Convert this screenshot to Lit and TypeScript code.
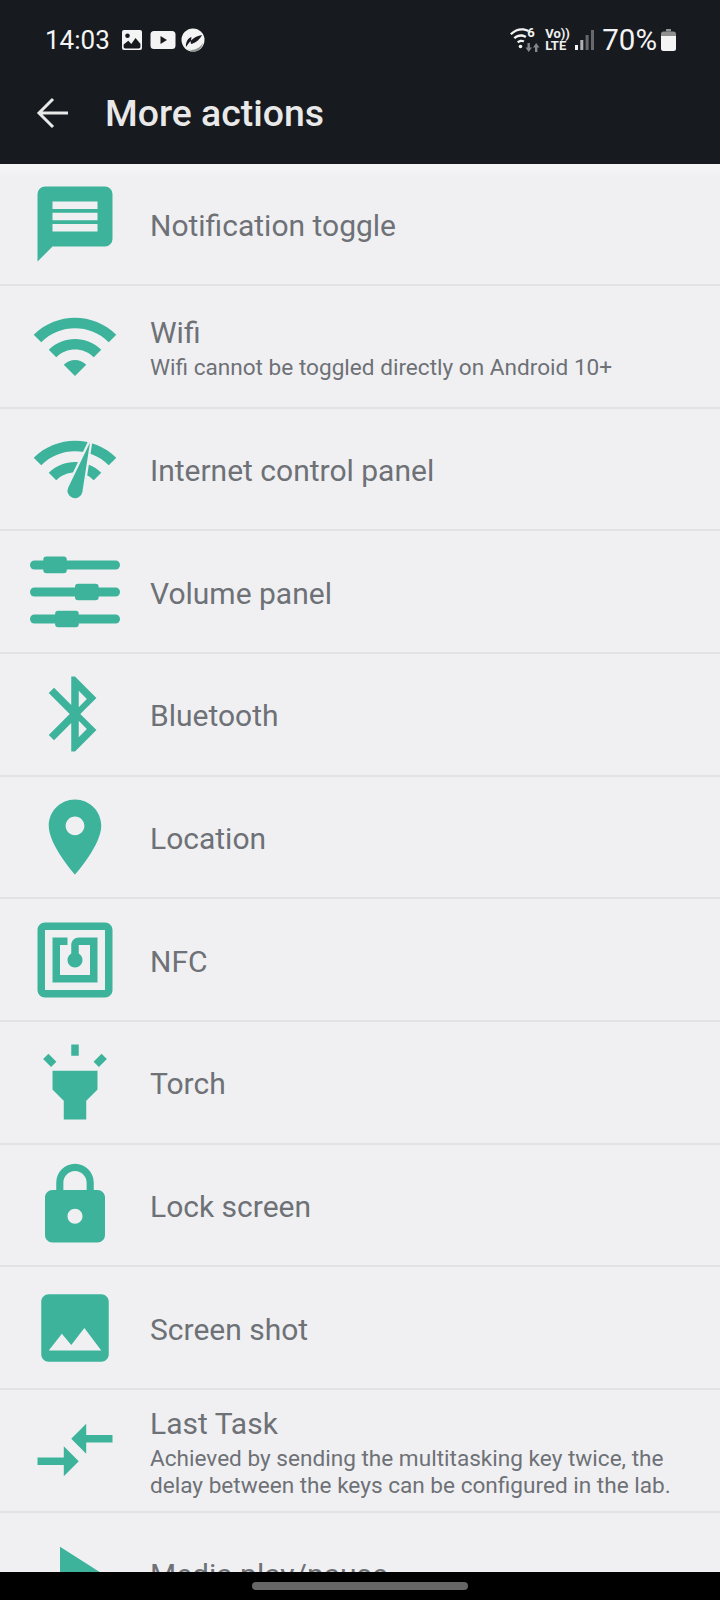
import { LitElement, html, css, svg } from "lit";
import { customElement } from "lit/decorators.js";

const WIFI_ARCS =
  "M1 9l2 2c4.97-4.97 13.03-4.97 18 0l2-2C16.93 2.93 7.08 2.93 1 9zM5 13l2 2c2.76-2.76 7.24-2.76 10 0l2-2C15.14 9.14 8.87 9.14 5 13z";

const ICONS = {
  chat: svg`<path d="M20 2H4a2 2 0 0 0-2 2v18l4-4h14a2 2 0 0 0 2-2V4a2 2 0 0 0-2-2zM6 6h12v2H6zm0 3h12v2H6zm0 3h12v2H6z" fill-rule="evenodd"/>`,
  wifi: svg`<path d="${WIFI_ARCS}"/><path d="M9 17l3 3 3-3c-1.65-1.66-4.34-1.66-6 0z"/>`,
  gauge: svg`<path d="${WIFI_ARCS}"/><path class="halo" d="M16 4.9L13.95 18.2A2 2 0 1 1 10.2 16.9Z"/>`,
  sliders: svg`
    <rect x="0" y="3.6" width="24" height="2.4" rx="1.2"/><rect x="3.55" y="2.5" width="6.25" height="4.5" rx=".8"/>
    <rect x="0" y="10.8" width="24" height="2.4" rx="1.2"/><rect x="12" y="9.8" width="6.3" height="4.4" rx=".8"/>
    <rect x="0" y="18" width="24" height="2.4" rx="1.2"/><rect x="6.7" y="17" width="6.3" height="4.4" rx=".8"/>`,
  bluetooth: svg`<path d="M17.71 7.71L12 2h-1v7.59L6.41 5 5 6.41 10.59 12 5 17.59 6.41 19 11 14.41V22h1l5.71-5.71-4.3-4.29 4.3-4.29zM13 5.83L15.17 8 13 10.17V5.83zm0 8L15.17 16 13 18.17v-4.34z"/>`,
  place: svg`<path d="M12 2C8.13 2 5 5.13 5 9c0 5.25 7 13 7 13s7-7.75 7-13c0-3.87-3.13-7-7-7zm0 9.5c-1.38 0-2.5-1.12-2.5-2.5s1.12-2.5 2.5-2.5 2.5 1.12 2.5 2.5-1.12 2.5-2.5 2.5z"/>`,
  nfc: svg`<path d="M20 2H4c-1.1 0-2 .9-2 2v16c0 1.1.9 2 2 2h16c1.1 0 2-.9 2-2V4c0-1.1-.9-2-2-2zm0 18H4V4h16v16zM18 6h-5c-1.1 0-2 .9-2 2v2.28c-.6.35-1 .98-1 1.72 0 1.1.9 2 2 2s2-.9 2-2c0-.74-.4-1.38-1-1.72V8h3v8H8V8h2V6H6v12h12V6z"/>`,
  torch: svg`<path d="M6 14l3 3v5h6v-5l3-3V9H6zm5-12h2v3h-2zM3.5 5.875L4.914 4.46l2.12 2.122L5.62 7.997zm13.46.71l2.123-2.12 1.414 1.413L18.375 8z"/>`,
  lock: svg`<path d="M18 8h-1V6c0-2.76-2.24-5-5-5S7 3.24 7 6v2H6c-1.1 0-2 .9-2 2v10c0 1.1.9 2 2 2h12c1.1 0 2-.9 2-2V10c0-1.1-.9-2-2-2zm-6 9c-1.1 0-2-.9-2-2s.9-2 2-2 2 .9 2 2-.9 2-2 2zm3.1-9H8.9V6c0-1.71 1.39-3.1 3.1-3.1 1.71 0 3.1 1.39 3.1 3.1v2z"/>`,
  image: svg`<path d="M21 19V5c0-1.1-.9-2-2-2H5c-1.1 0-2 .9-2 2v14c0 1.1.9 2 2 2h14c1.1 0 2-.9 2-2zM8.5 13.5l2.5 3.01L14.5 12l4.5 6H5l3.5-4.5z"/>`,
  swap: svg`<path d="M9.01 14H2v2h7.01v3L13 15l-3.99-4v3zm5.98-1v-3H22V8h-7.01V5L11 9l3.99 4z"/>`,
  play: svg`<path d="M8 5v14l11-7z"/>`,
};

type Action = { icon: keyof typeof ICONS; title: string; sub?: string[] };

const ACTIONS: Action[] = [
  { icon: "chat", title: "Notification toggle" },
  { icon: "wifi", title: "Wifi", sub: ["Wifi cannot be toggled directly on Android 10+"] },
  { icon: "gauge", title: "Internet control panel" },
  { icon: "sliders", title: "Volume panel" },
  { icon: "bluetooth", title: "Bluetooth" },
  { icon: "place", title: "Location" },
  { icon: "nfc", title: "NFC" },
  { icon: "torch", title: "Torch" },
  { icon: "lock", title: "Lock screen" },
  { icon: "image", title: "Screen shot" },
  {
    icon: "swap",
    title: "Last Task",
    sub: [
      "Achieved by sending the multitasking key twice, the",
      "delay between the keys can be configured in the lab.",
    ],
  },
  { icon: "play", title: "Media play/pause" },
];

@customElement("app-root")
export class AppRoot extends LitElement {
  static styles = css`
    :host {
      display: block;
      height: 1600px;
      font-family: Roboto, "Liberation Sans", sans-serif;
    }
    .page {
      height: 1600px;
      display: flex;
      flex-direction: column;
      overflow: hidden;
      background: #f0f0f3;
    }
    .top {
      flex: none;
      height: 163.5px;
      background: #171a1f;
      color: #e9e9e9;
      display: flex;
      flex-direction: column;
    }
    .status {
      height: 78px;
      padding: 2px 44px 0 45px;
      box-sizing: border-box;
      display: flex;
      align-items: center;
    }
    .clock {
      font-size: 26px;
      color: #f4f4f4;
      width: 76px;
    }
    .status svg {
      display: block;
      flex: none;
      fill: #f4f4f4;
    }
    .spacer {
      flex: 1;
    }
    .wifi6 {
      position: relative;
      width: 31px;
      height: 24px;
    }
    .wifi6 span {
      position: absolute;
      left: 18px;
      top: -2px;
      font-size: 13px;
      line-height: 14px;
      font-weight: 700;
      color: #f4f4f4;
    }
    .volte {
      width: 22px;
      margin-left: 5px;
      font-size: 13px;
      line-height: 12px;
      font-weight: 700;
      color: #f0f0f0;
      white-space: nowrap;
    }
    .pct {
      font-size: 29.5px;
      color: #f4f4f4;
      margin-left: 8px;
    }
    .bar {
      height: 85.5px;
      padding-bottom: 16px;
      box-sizing: border-box;
      display: flex;
      align-items: center;
    }
    .back {
      display: block;
      margin-left: 36px;
      stroke: #e9e9e9;
      fill: none;
      stroke-width: 3;
    }
    .title {
      margin-left: 35px;
      font-size: 37.4px;
      font-weight: 500;
    }
    .list {
      flex: 1;
      min-height: 0;
      overflow: hidden;
      background: linear-gradient(#f6f6f7, #f0f0f3 14px);
    }
    .row {
      height: 122.67px;
      box-sizing: border-box;
      border-bottom: 2px solid #e2e2e5;
      display: flex;
      align-items: center;
      gap: 30px;
      padding-left: 30px;
      color: #6e7176;
    }
    .row svg {
      flex: none;
      display: block;
      fill: #3cb39a;
    }
    .row svg .halo {
      stroke: #f0f0f3;
      stroke-width: 1.2;
      paint-order: stroke;
    }
    .label {
      padding-top: 4px;
    }
    .name {
      font-size: 30px;
      line-height: 36px;
    }
    .subs {
      margin-top: 3px;
    }
    .sub {
      font-size: 22.6px;
      line-height: 27px;
      white-space: nowrap;
    }
    .nav {
      flex: none;
      height: 28px;
      background: #000;
      display: flex;
      justify-content: center;
      align-items: center;
    }
    .pill {
      width: 216px;
      height: 8px;
      border-radius: 4px;
      background: #666;
    }
  `;

  renderStatus() {
    return html`<div class="status">
      <span class="clock">14:03</span>
      <svg width="22" height="22" viewBox="0 0 22 22">
        <path
          fill-rule="evenodd"
          d="M3 1h16a2 2 0 0 1 2 2v16a2 2 0 0 1-2 2H3a2 2 0 0 1-2-2V3a2 2 0 0 1 2-2zM2.600 15.500v2.200c0 1 .7 1.700 1.700 1.700h13.400c1 0 1.700-.7 1.700-1.700v-3L14.500 9l-4.200 6-3-3.200zM6.500 4.500a2.300 2.300 0 1 0 0 4.600 2.300 2.300 0 0 0 0-4.600z"
        />
      </svg>
      <svg width="26" height="20" viewBox="0 0 26 20" style="margin-left:7px">
        <path
          fill-rule="evenodd"
          d="M4 1h18a3.500 3.500 0 0 1 3.500 3.500v11A3.500 3.500 0 0 1 22 19H4a3.500 3.500 0 0 1-3.500-3.500v-11A3.500 3.500 0 0 1 4 1zM10.500 6v8l6.500-4z"
        />
      </svg>
      <svg width="24" height="24" viewBox="0 0 24 24" style="margin-left:5px">
        <circle cx="12" cy="12" r="11.500" />
        <path
          d="M5 19C4.500 14 7 10 10.500 9l-.5 3.500c3-3 7-5 11-5.500-2 4-6 8-11 9l-.5-3c-1.500 1.500-3 3.500-4.500 6z"
          fill="#171a1f"
        />
        <path d="M7 21.500c6 1.500 12-1 15-7-.5 1-.5 6-6 8.500-3 .7-6 0-9-1.500z" fill="#8f9092" />
      </svg>
      <span class="spacer"></span>
      <span class="wifi6">
        <svg width="31" height="24" viewBox="0 0 31 24">
          <path
            d="M1 5.500C7-.5 14-1 20 2l-1.200 2C14 1.500 8 2 2.600 7zM4.500 9.500c4-3.800 9-4 13-1.500l-1.300 2c-3-2-7-1.700-10 1zM8 13.500c2.500-2.200 5-2.300 7.500-1l-1.300 2c-1.500-.8-3.200-.6-4.700.7z"
          />
          <circle cx="11.500" cy="18.500" r="1.800" />
          <path d="M18.500 15h2.400v4.500h2L19.700 24l-3.200-4.500h2zM26 24h2.400v-4.500h2L27.200 15 24 19.500h2z" fill="#85878a" />
        </svg>
        <span>6</span>
      </span>
      <span class="volte">Vo))<br />LTE</span>
      <svg width="19" height="20" viewBox="0 0 19 20" style="margin-left:8px">
        <rect x="0" y="15" width="3" height="5" />
        <rect x="5.300" y="10" width="3" height="10" fill="#b0b1b3" />
        <rect x="10.600" y="5" width="3" height="15" fill="#66686b" />
        <rect x="16" y="0" width="3" height="20" fill="#66686b" />
      </svg>
      <span class="pct">70%</span>
      <svg width="15" height="22" viewBox="0 0 15 22" style="margin-left:4px">
        <path d="M5 0h5v2.500H5z" fill="#8f8f8f" />
        <path d="M2.500 2.500h10A2.500 2.500 0 0 1 15 5v2H0V5a2.500 2.500 0 0 1 2.500-2.500z" fill="#8f8f8f" />
        <path d="M0 7h15v12.500a2.500 2.500 0 0 1-2.500 2.500h-10A2.500 2.500 0 0 1 0 19.500z" />
      </svg>
    </div>`;
  }

  render() {
    return html`<div class="page">
      <div class="top">
        ${this.renderStatus()}
        <div class="bar">
          <svg class="back" width="34" height="34" viewBox="0 0 34 34">
            <path d="M32 17H4M17 3L3 17l14 14" />
          </svg>
          <span class="title">More actions</span>
        </div>
      </div>
      <div class="list">
        ${ACTIONS.map(
          (a) => html`<div class="row">
            <svg width="90" height="90" viewBox="0 0 24 24">${ICONS[a.icon]}</svg>
            <div class="label">
              <div class="name">${a.title}</div>
              ${a.sub
                ? html`<div class="subs">${a.sub.map((line) => html`<div class="sub">${line}</div>`)}</div>`
                : ""}
            </div>
          </div>`
        )}
      </div>
      <div class="nav"><div class="pill"></div></div>
    </div>`;
  }
}
